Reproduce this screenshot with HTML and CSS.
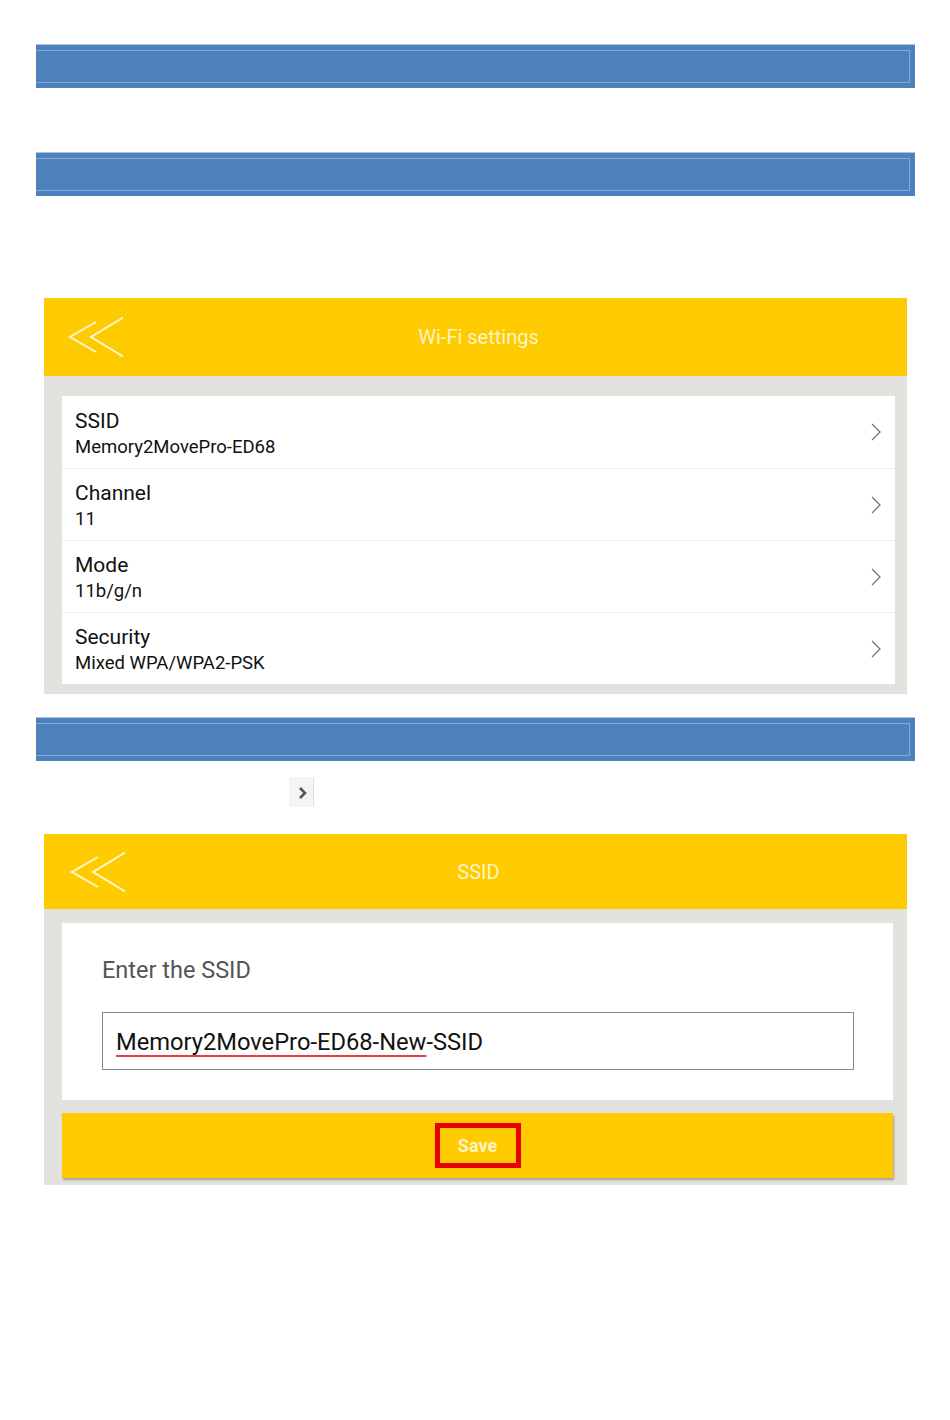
FILE: index.html
```html
<!DOCTYPE html>
<html lang="en">
    <head>
        <title>wi-fi settings</title>
        <meta charset="utf-8" />
        <meta name="viewport" content="width=device-width, initial-scale=1.0" />
        <link rel="stylesheet" href="styles.css">
    </head>
    <body>
        <div id="page">
            <div class="bar"><div class="bar-line"></div></div>
            <div class="bar second"><div class="bar-line"></div></div>

            <div class="phone list-phone">
                <div class="phone-head">
                    <svg class="back" width="60" height="44" viewBox="0 0 60 44">
                        <polyline points="33,7 7,22 33,37" />
                        <polyline points="61,2 28,22 61,42" />
                    </svg>
                    <h2>Wi-Fi settings</h2>
                </div>
                <div class="phone-body">
                    <div class="list">
                        <div class="row">
                            <div class="row-text">
                                <div class="name">SSID</div>
                                <div class="value">Memory2MovePro-ED68</div>
                            </div>
                            <svg class="more" width="12" height="18" viewBox="0 0 12 18"><polyline points="2,1 10,9 2,17" /></svg>
                        </div>
                        <div class="row">
                            <div class="row-text">
                                <div class="name">Channel</div>
                                <div class="value">11</div>
                            </div>
                            <svg class="more" width="12" height="18" viewBox="0 0 12 18"><polyline points="2,1 10,9 2,17" /></svg>
                        </div>
                        <div class="row">
                            <div class="row-text">
                                <div class="name">Mode</div>
                                <div class="value">11b/g/n</div>
                            </div>
                            <svg class="more" width="12" height="18" viewBox="0 0 12 18"><polyline points="2,1 10,9 2,17" /></svg>
                        </div>
                        <div class="row">
                            <div class="row-text">
                                <div class="name">Security</div>
                                <div class="value">Mixed WPA/WPA2-PSK</div>
                            </div>
                            <svg class="more" width="12" height="18" viewBox="0 0 12 18"><polyline points="2,1 10,9 2,17" /></svg>
                        </div>
                    </div>
                </div>
            </div>

            <div class="bar"><div class="bar-line"></div></div>

            <div class="hint">
                <svg width="24" height="31" viewBox="0 0 24 31"><polyline points="11,11 16,16 11,21" /></svg>
            </div>

            <div class="phone ssid-phone">
                <div class="phone-head">
                    <svg class="back" width="60" height="44" viewBox="0 0 60 44">
                        <polyline points="33,7 7,22 33,37" />
                        <polyline points="61,2 28,22 61,42" />
                    </svg>
                    <h2>SSID</h2>
                </div>
                <div class="phone-body">
                    <div class="card">
                        <label>Enter the SSID</label>
                        <div class="field"><span class="typo">Memory2MovePro-ED68-New</span>-SSID</div>
                    </div>
                    <div class="save-bar">
                        <button type="button" class="save">Save</button>
                    </div>
                </div>
            </div>
        </div>
    </body>
</html>
```

FILE: styles.css
```css
html, body {
    margin: 0px;
    padding: 0px;
    background: white;
    font-family: Roboto, "Noto Sans", sans-serif;
}
#page {
    padding: 44px 35px 0px 36px;
}
.bar {
    height: 44px;
    box-sizing: border-box;
    border-top: 1px solid #a9c4e8;
    padding: 5px 5px 5px 0px;
    background: #4f81bd;
}
.bar-line {
    height: 100%;
    box-sizing: border-box;
    border: 1px solid #86a9da;
    border-left: none;
}
.second {
    margin-top: 64px;
}
.phone {
    margin: 0px 8px;
    background: #e4e2df;
}
.list-phone {
    margin-top: 102px;
    margin-bottom: 23px;
    padding-bottom: 10px;
}
.phone-head {
    display: grid;
    grid-template-columns: 90px 1fr 84px;
    align-items: center;
    background: #fecb00;
}
.list-phone .phone-head {
    height: 78px;
}
.ssid-phone .phone-head {
    height: 75px;
}
.back {
    display: block;
    margin-left: 19px;
    fill: none;
    stroke: #fff6d2;
    stroke-width: 2;
}
.ssid-phone .back {
    margin-left: 21px;
}
.phone-head h2 {
    margin: 0px;
    text-align: center;
    color: #fff3c6;
    font-size: 20px;
    font-weight: normal;
}
.list-phone .phone-body {
    padding: 20px 12px 0px 18px;
}
.list {
    background: white;
}
.row {
    display: flex;
    align-items: center;
    justify-content: space-between;
    box-sizing: border-box;
    height: 72px;
    border-top: 1px solid #eeeeee;
    padding: 4px 13px 0px 13px;
}
.row:first-child {
    border-top: none;
}
.row .more {
    margin-top: -4px;
}
.name {
    line-height: 25px;
    color: #111;
    font-size: 21px;
}
.value {
    margin-top: 1px;
    line-height: 25px;
    color: #111;
    font-size: 18.5px;
}
.more {
    display: block;
    fill: none;
    stroke: #777;
    stroke-width: 1.3;
}
.hint {
    margin: 16px 0px 27px 253px;
    width: 24px;
    height: 30px;
    border-right: 1px solid #e2e2e2;
    background: #f4f4f4;
}
.hint svg {
    display: block;
    fill: none;
    stroke: #555;
    stroke-width: 2.6;
}
.ssid-phone .phone-body {
    padding: 14px 14px 7px 18px;
}
.card {
    padding: 34px 39px 30px 40px;
    background: white;
}
.card label {
    display: block;
    margin-bottom: 29px;
    line-height: 26px;
    color: #555;
    font-size: 23.5px;
}
.field {
    box-sizing: border-box;
    height: 58px;
    border: 1px solid #8a8a8a;
    padding: 0px 13px;
    line-height: 59px;
    color: #111;
    font-size: 23.7px;
}
.typo {
    text-decoration: underline solid #e0404a;
    text-decoration-thickness: 2px;
    text-underline-offset: 5px;
}
.save-bar {
    display: flex;
    justify-content: center;
    align-items: center;
    margin-top: 13px;
    height: 65px;
    background: #fecb00;
    box-shadow: 1px 2px 2px rgba(0, 0, 0, 0.3);
}
.save {
    box-sizing: border-box;
    width: 86px;
    height: 45px;
    border: 5px solid #e80000;
    padding: 0px;
    background: #fecb00;
    color: #fff3c6;
    font-family: Roboto, "Noto Sans", sans-serif;
    font-size: 18px;
    font-weight: bold;
    cursor: pointer;
}
```
